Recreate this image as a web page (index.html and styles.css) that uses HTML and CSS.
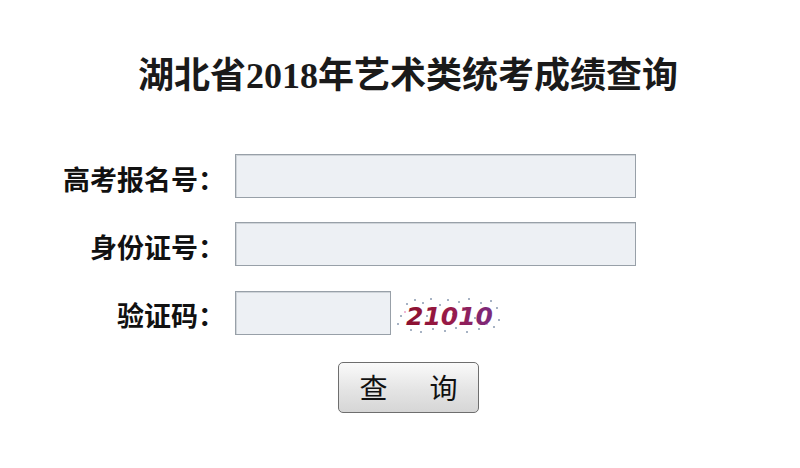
FILE: index.html
```html
<!DOCTYPE html>
<html lang="zh-CN">
<head>
  <meta charset="UTF-8">
  <title>湖北省2018年艺术类统考成绩查询</title>
  <link rel="stylesheet" href="styles.css">
</head>
<body>

  <h1 class="titulo">湖北省2018年艺术类统考成绩查询</h1>

  <form class="consulta">
    <label class="etiqueta" for="ksh">高考报名号：</label>
    <input class="campo" type="text" id="ksh">

    <label class="etiqueta" for="sfz">身份证号：</label>
    <input class="campo" type="text" id="sfz">

    <label class="etiqueta" for="yzm">验证码：</label>
    <div class="fila-yzm">
      <input class="campo campo-corto" type="text" id="yzm">
      <svg class="captcha" width="112" height="42" viewBox="0 0 112 42">
        <defs>
          <linearGradient id="tinta" x1="0" x2="1" y1="0" y2="0">
            <stop offset="0" stop-color="#8a1030"/>
            <stop offset="0.5" stop-color="#9a1a48"/>
            <stop offset="1" stop-color="#7a2a80"/>
          </linearGradient>
        </defs>
        <rect x="0" y="0" width="112" height="42" fill="#fff"/>
        <g fill="#8a9ab0">
          <circle cx="8" cy="22" r="1"/><circle cx="14" cy="10" r="1"/>
          <circle cx="22" cy="6" r="1"/><circle cx="30" cy="9" r="1"/>
          <circle cx="38" cy="5" r="1"/><circle cx="47" cy="11" r="1"/>
          <circle cx="55" cy="6" r="1"/><circle cx="66" cy="8" r="1"/>
          <circle cx="76" cy="5" r="1"/><circle cx="88" cy="9" r="1"/>
          <circle cx="98" cy="7" r="1"/><circle cx="104" cy="14" r="1"/>
          <circle cx="106" cy="26" r="1"/><circle cx="101" cy="33" r="1"/>
          <circle cx="18" cy="36" r="1"/><circle cx="28" cy="38" r="1"/>
          <circle cx="40" cy="35" r="1"/><circle cx="52" cy="37" r="1"/>
          <circle cx="63" cy="34" r="1"/><circle cx="74" cy="38" r="1"/>
          <circle cx="86" cy="35" r="1"/><circle cx="5" cy="30" r="1"/>
          <circle cx="34" cy="22" r="1"/><circle cx="60" cy="20" r="1"/>
          <circle cx="82" cy="24" r="1"/>
        </g>
        <g fill="#e8a0c8">
          <circle cx="12" cy="18" r="1"/><circle cx="44" cy="28" r="1"/>
          <circle cx="70" cy="14" r="1"/><circle cx="94" cy="30" r="1"/>
          <circle cx="24" cy="30" r="1"/>
        </g>
        <text x="13" y="31" class="captcha-texto" fill="url(#tinta)">21010</text>
      </svg>
    </div>

    <div></div>
    <button class="boton" type="submit"><span>查</span><span>询</span></button>
  </form>

</body>
</html>
```

FILE: styles.css
```css
body {
  margin: 0;
  background: #fff;
  font-family: "Noto Sans CJK SC", sans-serif;
  color: #111;
}

.titulo {
  margin: 56px 0 0 0;
  padding-left: 16px;
  text-align: center;
  font-family: "Liberation Serif", "Noto Sans CJK SC", serif;
  font-size: 36px;
  line-height: 40px;
  font-weight: bold;
  color: #1a1a1a;
}

.consulta {
  display: grid;
  grid-template-columns: 185px 401px;
  column-gap: 10px;
  row-gap: 24px;
  margin: 58px 0 0 40px;
}

.etiqueta {
  box-sizing: border-box;
  height: 44px;
  padding-top: 3px;
  text-align: right;
  font-size: 27px;
  font-weight: bold;
  line-height: 44px;
  color: #111;
}

.campo {
  box-sizing: border-box;
  width: 401px;
  height: 44px;
  margin: 0;
  border: 1px solid #98a0a8;
  box-shadow: inset 1px 1px 0 #cfd4d9;
  background: #edf0f4;
  border-radius: 0;
}

.fila-yzm {
  display: flex;
  align-items: center;
  gap: 2px;
}

.campo-corto {
  width: 156px;
}

.captcha {
  display: block;
  margin-top: 4px;
}

.captcha-texto {
  font-family: "DejaVu Sans", sans-serif;
  font-style: italic;
  font-weight: bold;
  font-size: 25px;
  letter-spacing: 0;
}

.boton {
  display: inline-flex;
  justify-content: center;
  gap: 42px;
  box-sizing: border-box;
  width: 141px;
  height: 51px;
  margin: 2px 0 0 103px;
  padding: 0 0 0 0;
  border: 1px solid #6e6e6e;
  border-radius: 5px;
  background: linear-gradient(#fafafa, #e4e4e4 55%, #d6d6d6);
  font-family: "Noto Sans CJK SC", sans-serif;
  font-size: 28px;
  line-height: 48px;
  color: #111;
  cursor: pointer;
}
```
